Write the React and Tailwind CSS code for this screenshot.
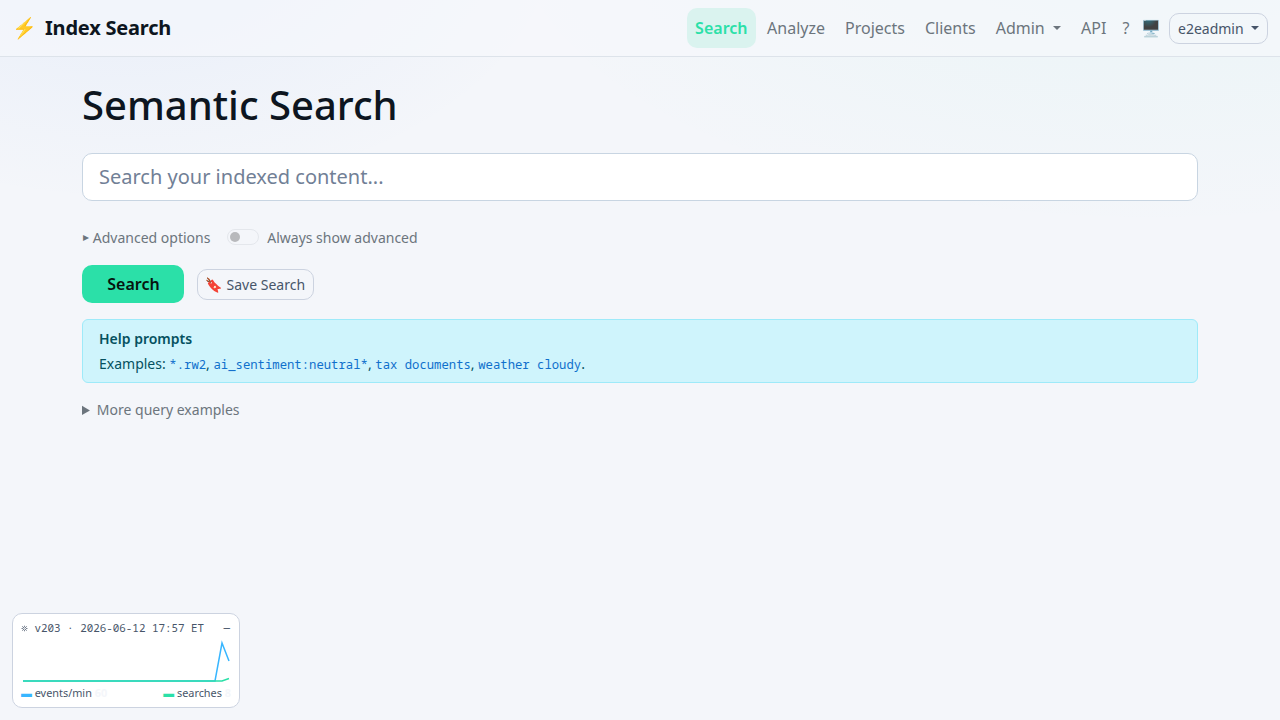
import { useState } from "react"

const navItems = ["Analyze", "Projects", "Clients"]
const examples = ["*.rw2", "ai_sentiment:neutral*", "tax documents", "weather cloudy"]

function Caret({ className = "" }) {
  return <span className={`inline-block h-0 w-0 border-x-transparent border-t-current ${className}`} />
}

function Navbar() {
  return (
    <nav className="flex h-[57px] items-center justify-between border-b border-[#dde3ea] bg-[#f6f9fc]/60 px-3">
      <a href="#" className="flex items-center text-[20px] font-bold leading-[30px] text-[#0d1520]">
        <span className="mr-2 w-[25px] whitespace-nowrap tracking-[-0.2px]">⚡</span>
        <span className="tracking-[-0.2px]">Index Search</span>
      </a>
      <div className="flex items-center text-[16px] leading-6 text-[#6c757d]">
        <a href="#" className="mr-[3.6px] rounded-[10px] bg-[#daf3ef] p-2 font-semibold text-[#2be0a8]">Search</a>
        {navItems.map((item) => (
          <a key={item} href="#" className="mr-1 p-2">{item}</a>
        ))}
        <a href="#" className="mr-[4.4px] flex items-center p-2">
          Admin
          <Caret className="ml-2 border-x-[4.8px] border-t-[4.8px]" />
        </a>
        <a href="#" className="p-2">API</a>
        <a href="#" className="p-2">?</a>
        <button type="button" className="ml-1 mr-[7.6px] w-5 whitespace-nowrap">🖥️</button>
        <button type="button" className="flex h-[31px] items-center rounded-[10px] border border-[#ccd3e0] px-2 text-[14px] leading-[21px] text-[#475569]">
          e2eadmin
          <Caret className="ml-[7.4px] border-x-[4.2px] border-t-[4.2px]" />
        </button>
      </div>
    </nav>
  )
}

function HelmIcon() {
  return (
    <svg viewBox="0 0 7 7" className="mr-[6.5px] mt-px h-[7px] w-[7px]" fill="none" stroke="currentColor">
      <path d="M3.5 1.6L5.4 3.5L3.5 5.4L1.6 3.5Z" strokeWidth="0.8" />
      <path d="M3.5 0.7V1.6M3.5 5.4V6.3M0.5 3.5H1.6M5.4 3.5H6.5M1.2 1.3L2.2 2.2M4.8 4.8L5.8 5.7M5.8 1.3L4.8 2.2M2.2 4.8L1.2 5.7M3.2 3.5H3.8" strokeWidth="0.7" />
    </svg>
  )
}

function VersionWidget() {
  return (
    <aside className="fixed bottom-3 left-3 h-[95px] w-[228px] rounded-[10px] border border-[#ccd3e0] bg-white px-2 pt-1.5 text-[#475569]">
      <div className="flex h-4 items-start justify-between font-['Noto_Sans_Mono','DejaVu_Sans_Mono',monospace] text-[10.88px] leading-4">
        <span className="flex items-center">
          <HelmIcon />
          v203 · 2026-06-12 17:57 ET
        </span>
        <span className="mr-px leading-[14px]">—</span>
      </div>
      <svg viewBox="0 0 210 46" className="block h-[46px] w-[210px]" fill="none" strokeWidth="1.5">
        <path d="M2 45H194L201 7L208 25" stroke="#38b6ff" />
        <path d="M2 45H201L208 42.5" stroke="#2be0a8" />
      </svg>
      <div className="mt-[3px] flex justify-between text-[10.88px] leading-4">
        <span><span className="text-[#38b6ff]">▬</span> events/min <b className="text-[#f4f6fa]">60</b></span>
        <span><span className="text-[#2be0a8]">▬</span> searches <b className="text-[#f4f6fa]">8</b></span>
      </div>
    </aside>
  )
}

export default function App() {
  const [query, setQuery] = useState("")
  const [always, setAlways] = useState(false)

  return (
    <div className="min-h-screen bg-[#f4f6fa] bg-[radial-gradient(800px_500px_at_10%_-10%,rgba(56,120,235,0.07),transparent_55%),radial-gradient(1100px_500px_at_90%_-10%,rgba(43,214,178,0.055),transparent_60%)] font-['Noto_Sans',sans-serif] text-[#0d1520]">
      <Navbar />
      <main className="mx-auto w-[1116px] pt-6">
        <h1 className="text-[40px] font-medium leading-[48px]">Semantic Search</h1>
        <input
          value={query}
          onChange={(event) => setQuery(event.target.value)}
          placeholder="Search your indexed content..."
          className="mt-6 block h-12 w-full rounded-[10px] border border-[#c8d5e2] bg-white px-4 pb-0.5 text-[20px] outline-none placeholder:text-[#718096]"
        />
        <div className="mt-[26px] flex h-[21px] items-center text-[14px] leading-[21px] text-[#6c757d]">
          <button type="button" className="flex items-center whitespace-pre">
            <span className="mb-0.5 w-[10.8px] pl-[0.8px] text-left text-[12px]">▸</span>Advanced options
          </button>
          <label className="ml-[16.3px] flex items-center">
            <input type="checkbox" className="peer sr-only" checked={always} onChange={(event) => setAlways(event.target.checked)} />
            <span className="mb-[2px] mr-[8.5px] flex h-4 w-8 items-center rounded-full border border-[#e4e7ec] pl-0.5 peer-checked:justify-end peer-checked:pr-0.5">
              <span className="h-2.5 w-2.5 rounded-full bg-[#b8b9bc]" />
            </span>
            Always show advanced
          </label>
        </div>
        <div className="mt-[17px] flex items-center">
          <button type="button" className="h-[38px] w-[102px] rounded-[10px] bg-[#2be0a8] pl-px text-[16px] font-semibold text-[#06140f]">Search</button>
          <button type="button" className="ml-[13px] h-[31px] w-[117px] whitespace-nowrap rounded-[10px] border border-[#ccd3e0] text-[14px] text-[#475569]"><span className="-ml-px mr-px">🔖</span> Save Search</button>
        </div>
        <section className="mt-4 h-16 rounded-[6px] border border-[#9eeaf9] bg-[#cff4fc] px-4 pt-2 text-[14px] leading-[21px] text-[#055160]">
          <p className="font-semibold">Help prompts</p>
          <p className="mt-1">
            Examples:{" "}
            {examples.map((example, index) => (
              <span key={example}>
                <code className="font-['Noto_Sans_Mono','DejaVu_Sans_Mono',monospace] text-[12.25px] text-[#0f70cc]">{example}</code>
                {index < examples.length - 1 ? ", " : "."}
              </span>
            ))}
          </p>
        </section>
        <details className="mt-4 text-[14px] leading-[21px] text-[#6c757d]">
          <summary>More query examples</summary>
        </details>
      </main>
      <VersionWidget />
    </div>
  )
}
